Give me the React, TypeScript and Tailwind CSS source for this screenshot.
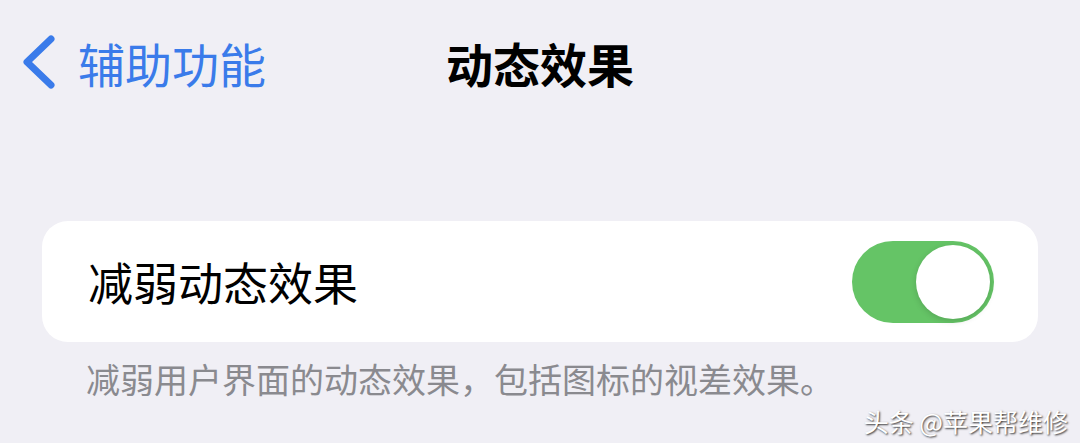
const cjk = { fontFamily: '"Noto Sans CJK SC", "Noto Sans", sans-serif' };

const Toggle = ({ on }: { on: boolean }) => {
    return (
        <div className={`flex h-[82px] w-[142px] items-center rounded-full p-[4px] ${on ? "justify-end bg-[#65c466]" : "justify-start bg-[#e9e9eb]"}`}>
            <div className="h-[74px] w-[74px] rounded-full bg-white shadow-[0_2px_6px_rgba(0,0,0,0.15)]" />
        </div>
    );
}

const App = () => {
    return (
        <div className="relative flex h-[443px] w-[1080px] flex-col overflow-hidden bg-[#f0eff5]" style={cjk}>
            <header className="grid h-[124px] grid-cols-[1fr_auto_1fr] items-center">
                <button className="flex items-center gap-[22px] pl-[22px] text-[#3a7bea]">
                    <svg width="34" height="54" viewBox="0 0 34 54" fill="none">
                        <path d="M29 4 L5 27 L29 50" stroke="currentColor" strokeWidth="7" strokeLinecap="round" strokeLinejoin="round" />
                    </svg>
                    <span className="text-[47px] leading-none">辅助功能</span>
                </button>
                <h1 className="text-[47px] font-bold leading-none text-black">动态效果</h1>
                <div />
            </header>

            <section className="mx-[42px] mt-[97px] flex h-[121px] items-center justify-between rounded-[26px] bg-white pl-[46px] pr-[44px]">
                <span className="text-[45px] leading-none text-black">减弱动态效果</span>
                <Toggle on={true} />
            </section>

            <p className="mt-[20px] pl-[86px] text-[34px] leading-none text-[#8a8a8f]">
                减弱用户界面的动态效果，包括图标的视差效果。
            </p>

            <span className="absolute bottom-[9px] right-[12px] text-[25px] leading-none text-white [text-shadow:1px_1px_2px_rgba(0,0,0,0.8)]">
                头条 @苹果帮维修
            </span>
        </div>
    );
}

export default App;
